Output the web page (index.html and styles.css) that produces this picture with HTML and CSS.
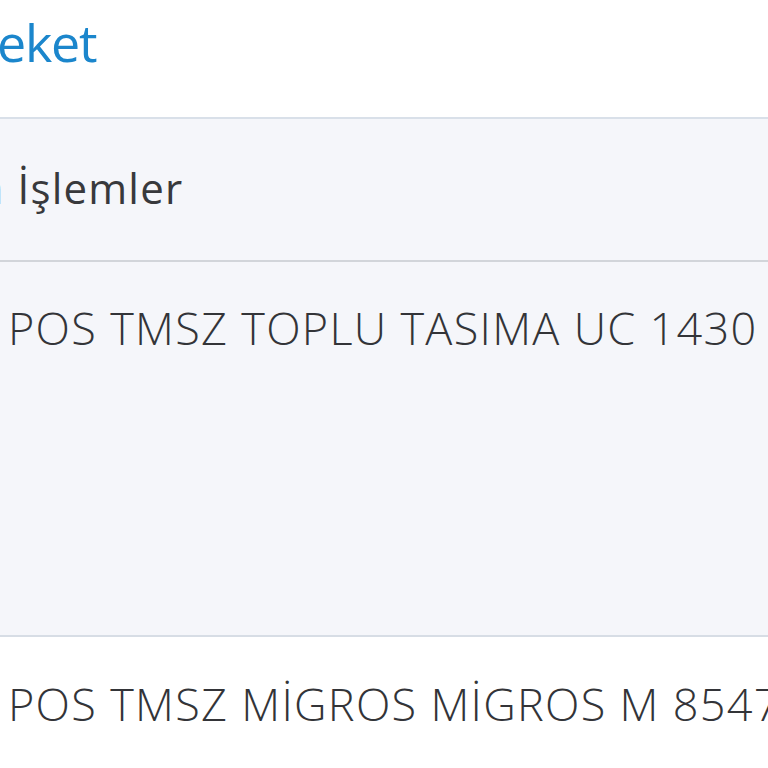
FILE: index.html
```html
<!DOCTYPE html>
<html lang="tr">
<head>
<meta charset="utf-8">
<link rel="stylesheet" href="styles.css">
</head>
<body>
<div class="screen">
  <div class="title"><span class="title-text">eket</span></div>
  <div class="head"><span class="cut">a</span><span class="head-text">İşlemler</span></div>
  <div class="row row-alt"><span class="desc">POS TMSZ TOPLU TASIMA UC 1430</span></div>
  <div class="row row-white"><span class="desc">POS TMSZ MİGROS MİGROS M 8547</span></div>
</div>
</body>
</html>
```
FILE: styles.css
```css
html, body {
  margin: 0;
  padding: 0;
  background: #ffffff;
  overflow: hidden;
}
.screen {
  width: 768px;
  height: 768px;
  overflow: hidden;
  font-family: "Open Sans", "Noto Sans", sans-serif;
  color: #38393c;
}
.title {
  height: 119px;
  box-sizing: border-box;
  padding-top: 5px;
  border-bottom: 2px solid #d9e0e9;
  white-space: nowrap;
}
.title-text {
  display: block;
  font-size: 52px;
  line-height: 74px;
  letter-spacing: -1.2px;
  color: #1b86cc;
  margin-left: -3px;
}
.head {
  height: 143px;
  box-sizing: border-box;
  background: #f5f6fa;
  border-bottom: 2px solid #d2d5da;
  display: flex;
  align-items: center;
  font-size: 42px;
  letter-spacing: 1.2px;
  white-space: nowrap;
  padding-bottom: 4px;
}
.cut {
  margin-left: -20px;
  margin-right: 13px;
}
.row {
  box-sizing: border-box;
  white-space: nowrap;
  font-size: 45px;
  font-weight: 300;
  letter-spacing: 1.3px;
  color: #333438;
}
.row-alt {
  height: 375px;
  background: #f5f6fa;
  border-bottom: 2px solid #d7dde5;
  padding-top: 36px;
}
.row-white {
  height: 131px;
  background: #ffffff;
  padding-top: 37px;
}
.desc {
  display: block;
  line-height: 60px;
  padding-left: 8px;
}
```
